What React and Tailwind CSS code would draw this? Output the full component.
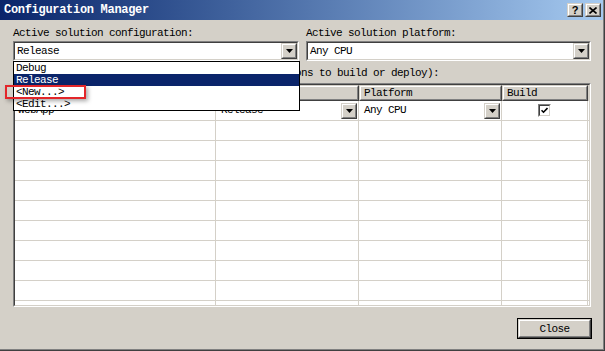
import React from 'react'

const mono = "font-['Liberation_Mono','DejaVu_Sans_Mono',monospace] text-[11px] tracking-[-0.6px]"

const Arrow = () => (
    <svg width="7" height="4" viewBox="0 0 7 4">
        <path d="M0 0h7L3.5 4z" fill="#000" />
    </svg>
)

// raised 3D push button (Win2000 style)
const Raised = ({ className = '', children }) => (
    <div className={`border border-t-[#d4d0c8] border-l-[#d4d0c8] border-b-[#404040] border-r-[#404040] ${className}`}>
        <div className="w-full h-full border border-t-white border-l-white border-b-[#808080] border-r-[#808080] bg-[#d4d0c8] flex items-center justify-center">
            {children}
        </div>
    </div>
)

const Sunken = ({ className = '', innerClass = '', children }) => (
    <div className={`border border-t-[#808080] border-l-[#808080] border-b-white border-r-white ${className}`}>
        <div className={`w-full h-full border border-t-[#404040] border-l-[#404040] border-b-[#d4d0c8] border-r-[#d4d0c8] ${innerClass}`}>
            {children}
        </div>
    </div>
)

const Combo = ({ value }) => (
    <Sunken className="h-[20px] w-full" innerClass="bg-white flex items-center justify-between">
        <span className="pl-[2px] leading-[12px]">{value}</span>
        <Raised className="w-[16px] h-[16px]"><Arrow /></Raised>
    </Sunken>
)

const cols = ['w-[201px]', 'w-[143px]', 'w-[143px]', 'w-[86px]']

const App = () => {
    const rows = Array.from({ length: 10 })

    return (
        <div className={`relative w-[605px] h-[351px] bg-[#d4d0c8] text-black overflow-hidden ${mono}`}>
            <div className="w-full h-full flex flex-col border-r border-b border-[#404040]">
                <div className="w-full h-full flex flex-col border-r border-b border-[#808080]">
                    {/* Title bar */}
                    <div className="h-[20px] flex items-center justify-between bg-gradient-to-r from-[#0a246a] to-[#a6caf0] pl-[4px] pr-[2px]">
                        <span className="text-white font-bold text-[12px] tracking-[-0.3px] leading-[14px]">Configuration Manager</span>
                        <div className="flex">
                            <Raised className="w-[16px] h-[14px]">
                                <span className="font-bold text-[11px] leading-[10px] tracking-normal font-['Liberation_Sans',sans-serif]">?</span>
                            </Raised>
                            <Raised className="w-[16px] h-[14px] ml-[2px]">
                                <svg width="8" height="7" viewBox="0 0 8 7">
                                    <path d="M0.5 0.5L7.5 6.5M7.5 0.5L0.5 6.5" stroke="#000" strokeWidth="1.6" />
                                </svg>
                            </Raised>
                        </div>
                    </div>

                    {/* Body */}
                    <div className="flex-1 flex flex-col pl-[12px] pr-[10px] pt-[7px]">
                        <div className="flex gap-[7px]">
                            <div className="w-[287px] flex flex-col pl-[1px]">
                                <div className="h-[12px] leading-[12px]">Active solution configuration:</div>
                                <div className="mt-[2px]"><Combo value="Release" /></div>
                            </div>
                            <div className="w-[285px] flex flex-col">
                                <div className="h-[12px] leading-[12px]">Active solution platform:</div>
                                <div className="mt-[2px]"><Combo value="Any CPU" /></div>
                            </div>
                        </div>

                        <div className="mt-[6px] h-[12px] leading-[12px] pl-[1px] whitespace-nowrap">
                            Project contexts (check the project configurations to build or deploy):
                        </div>

                        {/* Grid */}
                        <Sunken className="mt-[4px] h-[224px] w-[578px] ml-[1px]" innerClass="bg-white overflow-hidden flex flex-col">
                            <div className="flex h-[16px] bg-[#d4d0c8] shrink-0">
                                {['Project', 'Configuration', 'Platform', 'Build'].map((h, i) => (
                                    <Raised key={h} className={`${cols[i]} h-[16px]`}>
                                        <span className="w-full pl-[3px] leading-[12px]">{h}</span>
                                    </Raised>
                                ))}
                            </div>
                            <div className="flex h-[20px] shrink-0 border-b border-[#d4d0c8]">
                                <div className={`${cols[0]} border-r border-[#d4d0c8] pl-[3px] flex items-center`}>WebApp</div>
                                <div className={`${cols[1]} border-r border-[#d4d0c8] pl-[5px] pr-[1px] flex items-center justify-between`}>
                                    <span>Release</span>
                                    <Raised className="w-[16px] h-[16px]"><Arrow /></Raised>
                                </div>
                                <div className={`${cols[2]} border-r border-[#d4d0c8] pl-[5px] pr-[1px] flex items-center justify-between`}>
                                    <span>Any CPU</span>
                                    <Raised className="w-[16px] h-[16px]"><Arrow /></Raised>
                                </div>
                                <div className={`${cols[3]} border-r border-[#d4d0c8] flex items-center justify-center`}>
                                    <Sunken className="w-[13px] h-[13px]" innerClass="bg-white flex items-center justify-center">
                                        <svg width="7" height="7" viewBox="0 0 7 7">
                                            <path d="M0.5 3.2L2.5 5.2L6.5 1" stroke="#000" strokeWidth="1.6" fill="none" />
                                        </svg>
                                    </Sunken>
                                </div>
                            </div>
                            {rows.map((_, r) => (
                                <div key={r} className="flex h-[20px] shrink-0 border-b border-[#d4d0c8]">
                                    {cols.map((c, i) => (
                                        <div key={i} className={`${c} border-r border-[#d4d0c8]`} />
                                    ))}
                                </div>
                            ))}
                        </Sunken>

                        <div className="flex justify-end mt-[11px] pr-[1px]">
                            <div className="w-[75px] h-[21px] border border-black">
                                <Raised className="w-full h-full">
                                    <span className="leading-[12px]">Close</span>
                                </Raised>
                            </div>
                        </div>
                    </div>
                </div>
            </div>

            {/* Open dropdown list */}
            <div className="absolute left-[13px] top-[61px] w-[287px] h-[50px] bg-white border border-black flex flex-col">
                <div className="h-[12px] leading-[12px] pl-[2px]">Debug</div>
                <div className="h-[12px] leading-[12px] pl-[2px] bg-[#0a246a] text-white">Release</div>
                <div className="h-[12px] leading-[12px] pl-[2px]">&lt;New...&gt;</div>
                <div className="h-[12px] leading-[12px] pl-[2px]">&lt;Edit...&gt;</div>
            </div>

            {/* Red highlight annotation */}
            <div className="absolute left-[5px] top-[85px] w-[81px] h-[14px] border-2 border-[#e3262a] shadow-[2px_2px_4px_rgba(0,0,0,0.35)]" />
        </div>
    )
}

export default App
